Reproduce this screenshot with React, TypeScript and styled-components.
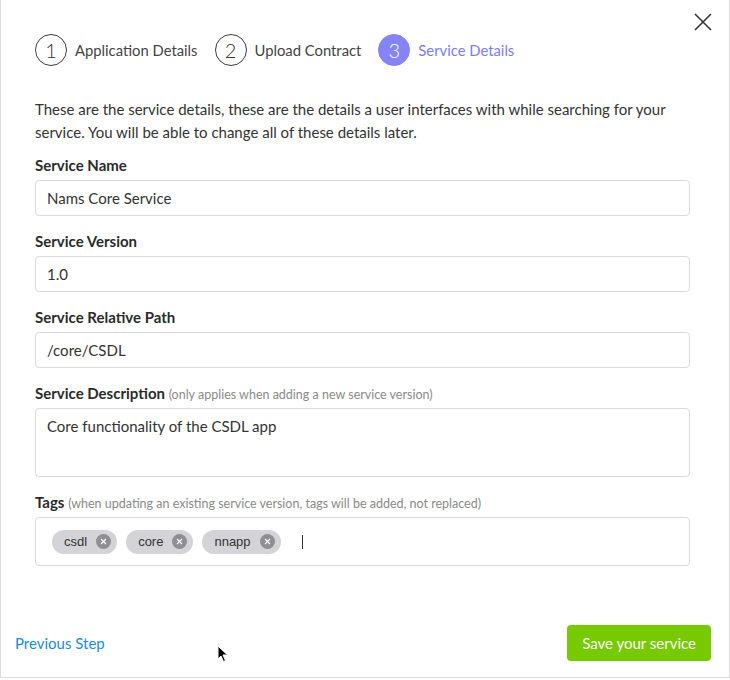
import React from "react";
import styled, { createGlobalStyle } from "styled-components";

const GlobalStyle = createGlobalStyle`
  html, body {
    margin: 0;
    padding: 0;
    background: #ffffff;
  }
  body {
    font-family: Lato, "Open Sans", "Noto Sans", sans-serif;
    color: #333333;
  }
`;

const steps = [
  { num: 1, label: "Application Details" },
  { num: 2, label: "Upload Contract" },
  { num: 3, label: "Service Details", active: true },
];

const tags = ["csdl", "core", "nnapp"];

const Modal = styled.div`
  position: relative;
  box-sizing: border-box;
  width: 730px;
  height: 678px;
  border: 1px solid #dcdcdc;
  border-top: none;
  display: flex;
  flex-direction: column;
`;

const CloseButton = styled.button`
  position: absolute;
  top: 12px;
  right: 16px;
  width: 20px;
  height: 20px;
  padding: 0;
  border: none;
  background: none;
  cursor: pointer;
`;

const Content = styled.div`
  padding: 34px 39px 0 34px;
`;

const Stepper = styled.div`
  display: flex;
  align-items: center;
  gap: 17px;
`;

const Step = styled.div`
  display: flex;
  align-items: center;
  gap: 8px;
`;

const StepCircle = styled.div<{ $active?: boolean }>`
  box-sizing: border-box;
  width: 32px;
  height: 32px;
  border-radius: 50%;
  border: 1px solid ${(p) => (p.$active ? "#8584f7" : "#3d3d3d")};
  background: ${(p) => (p.$active ? "#8584f7" : "#ffffff")};
  color: ${(p) => (p.$active ? "#ffffff" : "#333333")};
  display: flex;
  align-items: center;
  justify-content: center;
  font-size: 20px;
  font-weight: 300;
`;

const StepLabel = styled.span<{ $active?: boolean }>`
  font-size: 14.8px;
  color: ${(p) => (p.$active ? "#7d7cf2" : "#444444")};
`;

const Intro = styled.p`
  margin: 32px 0 11px;
  font-size: 15px;
  line-height: 23px;
  color: #333333;
`;

const Field = styled.div`
  display: flex;
  flex-direction: column;
  gap: 5px;
  margin-bottom: 15px;
`;

const Label = styled.label`
  display: block;
  height: 20px;
  font-size: 15px;
  line-height: 20px;
  font-weight: 700;
  color: #2b2b2b;
`;

const Hint = styled.span`
  font-size: 12.5px;
  line-height: 1;
  font-weight: 400;
  color: #8a8a8a;
`;

const Input = styled.input`
  box-sizing: border-box;
  width: 100%;
  height: 36px;
  padding: 0 11px;
  border: 1px solid #dadada;
  border-radius: 4px;
  font-family: inherit;
  font-size: 15px;
  color: #333333;
  outline: none;
`;

const TextArea = styled.textarea`
  box-sizing: border-box;
  width: 100%;
  height: 69px;
  padding: 7px 11px;
  border: 1px solid #dadada;
  border-radius: 4px;
  font-family: inherit;
  font-size: 15px;
  line-height: 20px;
  color: #333333;
  resize: none;
  outline: none;
`;

const TagBox = styled.div`
  box-sizing: border-box;
  height: 49px;
  padding: 0 16px;
  border: 1px solid #dadada;
  border-radius: 4px;
  display: flex;
  align-items: center;
  gap: 9px;
`;

const Chip = styled.span`
  display: inline-flex;
  align-items: center;
  gap: 9px;
  height: 24px;
  padding: 0 6px 0 12px;
  border-radius: 12px;
  background: #d4d4d8;
  font-family: "Liberation Sans", Arial, sans-serif;
  font-size: 13px;
  color: #333333;
`;

const ChipRemove = styled.span`
  width: 15px;
  height: 15px;
  border-radius: 50%;
  background: #8e8e93;
  display: flex;
  align-items: center;
  justify-content: center;
`;

const Caret = styled.span`
  width: 1px;
  height: 14px;
  margin-left: 12px;
  background: #333333;
`;

const Footer = styled.div`
  margin-top: auto;
  padding: 0 18px 16px 14px;
  display: flex;
  align-items: center;
  justify-content: space-between;
`;

const PrevLink = styled.a`
  font-size: 15px;
  color: #1a8cd8;
  text-decoration: none;
  cursor: pointer;
`;

const SaveButton = styled.button`
  height: 36px;
  padding: 0 15px;
  border: none;
  border-radius: 4px;
  background: #77c900;
  color: #ffffff;
  font-family: inherit;
  font-size: 15px;
  cursor: pointer;
`;

const Pointer = styled.div`
  position: absolute;
  left: 216px;
  top: 645px;
  pointer-events: none;
`;

export default function App() {
  return (
    <>
      <GlobalStyle />
      <Modal>
        <CloseButton aria-label="Close">
          <svg width="20" height="20" viewBox="0 0 20 20">
            <path d="M2 2 L18 18 M18 2 L2 18" stroke="#333" strokeWidth="1.6" />
          </svg>
        </CloseButton>
        <Content>
          <Stepper>
            {steps.map((s) => (
              <Step key={s.num}>
                <StepCircle $active={s.active}>{s.num}</StepCircle>
                <StepLabel $active={s.active}>{s.label}</StepLabel>
              </Step>
            ))}
          </Stepper>
          <Intro>
            These are the service details, these are the details a user interfaces with while searching for your
            service. You will be able to change all of these details later.
          </Intro>
          <Field>
            <Label>Service Name</Label>
            <Input defaultValue="Nams Core Service" />
          </Field>
          <Field>
            <Label>Service Version</Label>
            <Input defaultValue="1.0" />
          </Field>
          <Field>
            <Label>Service Relative Path</Label>
            <Input defaultValue="/core/CSDL" />
          </Field>
          <Field>
            <Label>
              Service Description <Hint>(only applies when adding a new service version)</Hint>
            </Label>
            <TextArea defaultValue="Core functionality of the CSDL app" />
          </Field>
          <Field>
            <Label>
              Tags <Hint>(when updating an existing service version, tags will be added, not replaced)</Hint>
            </Label>
            <TagBox>
              {tags.map((t) => (
                <Chip key={t}>
                  {t}
                  <ChipRemove>
                    <svg width="7" height="7" viewBox="0 0 7 7">
                      <path d="M1 1 L6 6 M6 1 L1 6" stroke="#fff" strokeWidth="1.2" />
                    </svg>
                  </ChipRemove>
                </Chip>
              ))}
              <Caret />
            </TagBox>
          </Field>
        </Content>
        <Footer>
          <PrevLink>Previous Step</PrevLink>
          <SaveButton>Save your service</SaveButton>
        </Footer>
        <Pointer>
          <svg width="12" height="18" viewBox="0 0 12 18">
            <path d="M1 1 L1 14 L4 11 L6.5 16.5 L8.5 15.5 L6 10 L10.5 10 Z" fill="#000" stroke="#fff" strokeWidth="1" />
          </svg>
        </Pointer>
      </Modal>
    </>
  );
}
